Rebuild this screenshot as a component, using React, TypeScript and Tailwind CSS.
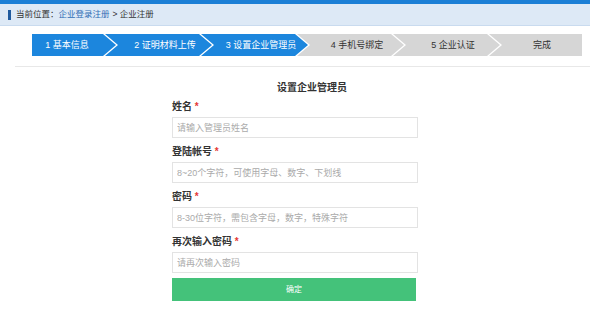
import React from "react";

type Step = { label: string; done: boolean };

const STEPS: Step[] = [
  { label: "1 基本信息", done: true },
  { label: "2 证明材料上传", done: true },
  { label: "3 设置企业管理员", done: true },
  { label: "4 手机号绑定", done: false },
  { label: "5 企业认证", done: false },
  { label: "完成", done: false },
];

const CLIP_FIRST =
  "[clip-path:polygon(0_0,calc(100%_-_13px)_0,100%_50%,calc(100%_-_13px)_100%,0_100%)]";
const CLIP_MID =
  "[clip-path:polygon(0_0,calc(100%_-_13px)_0,100%_50%,calc(100%_-_13px)_100%,0_100%,13px_50%)]";
const CLIP_LAST = "[clip-path:polygon(0_0,100%_0,100%_100%,0_100%,13px_50%)]";

type Field = { label: string; placeholder: string; type?: string };

const FIELDS: Field[] = [
  { label: "姓名", placeholder: "请输入管理员姓名" },
  { label: "登陆帐号", placeholder: "8~20个字符，可使用字母、数字、下划线" },
  { label: "密码", placeholder: "8-30位字符，需包含字母，数字，特殊字符", type: "password" },
  { label: "再次输入密码", placeholder: "请再次输入密码", type: "password" },
];

function StepBar() {
  return (
    <div className="ml-[32px] mt-[8px] flex h-[22px] w-[550px] bg-white">
      {STEPS.map((s, i) => {
        const first = i === 0;
        const last = i === STEPS.length - 1;
        const clip = first ? CLIP_FIRST : last ? CLIP_LAST : CLIP_MID;
        const width = first ? "w-[84px]" : last ? "w-[93px] ml-[-11px]" : "w-[107px] ml-[-11px]";
        const pad = first ? "pr-[14px]" : "pl-[13px]";
        const color = s.done ? "bg-[#1c86dd] text-white" : "bg-[#d6d6d6] text-[#333]";
        return (
          <div
            key={s.label}
            className={`${clip} ${width} ${pad} ${color} flex h-full shrink-0 items-center justify-center text-[9px] leading-none`}
          >
            {s.label}
          </div>
        );
      })}
    </div>
  );
}

export default function App() {
  return (
    <div
      className="min-h-[309px] w-[590px] bg-white text-[#333]"
      style={{ fontFamily: '"Liberation Sans", "Noto Sans CJK SC", sans-serif' }}
    >
      {/* top strip */}
      <div className="h-[4px] bg-[#1b7fd6]" />

      {/* breadcrumb */}
      <div className="flex h-[22px] items-center border-b border-[#c9dbef] bg-[#dde9f6] pl-[8px] text-[8.5px]">
        <span className="mr-[5px] h-[10px] w-[3px] bg-[#1f5a9e]" />
        <span>当前位置：</span>
        <a className="text-[#2f6db5]">企业登录注册</a>
        <span className="ml-[3px]">&gt; 企业注册</span>
      </div>

      <StepBar />

      <div className="ml-[15px] mt-[10px] h-px bg-[#e8e8e8]" />

      {/* form */}
      <div className="mx-auto w-[246px] pt-[14px]">
        <h2 className="pl-[34px] text-center text-[10px] font-bold leading-[14px]">设置企业管理员</h2>

        <div className="mt-[5px]">
          {FIELDS.map((f) => (
            <div key={f.label} className="mb-[7px]">
              <label className="block text-[10px] font-bold leading-[14px]">
                {f.label} <span className="text-[#e53935]">*</span>
              </label>
              <input
                type={f.type ?? "text"}
                placeholder={f.placeholder}
                className="mt-[3px] block h-[21px] w-full border border-[#e3e3e3] bg-white px-[4px] text-[9px] outline-none placeholder:text-[#aaa]"
              />
            </div>
          ))}
        </div>

        <button
          type="button"
          className="mt-[-2px] flex h-[23px] w-[244px] items-center justify-center bg-[#44c27a] text-[8px] text-white"
        >
          确定
        </button>
      </div>
    </div>
  );
}
